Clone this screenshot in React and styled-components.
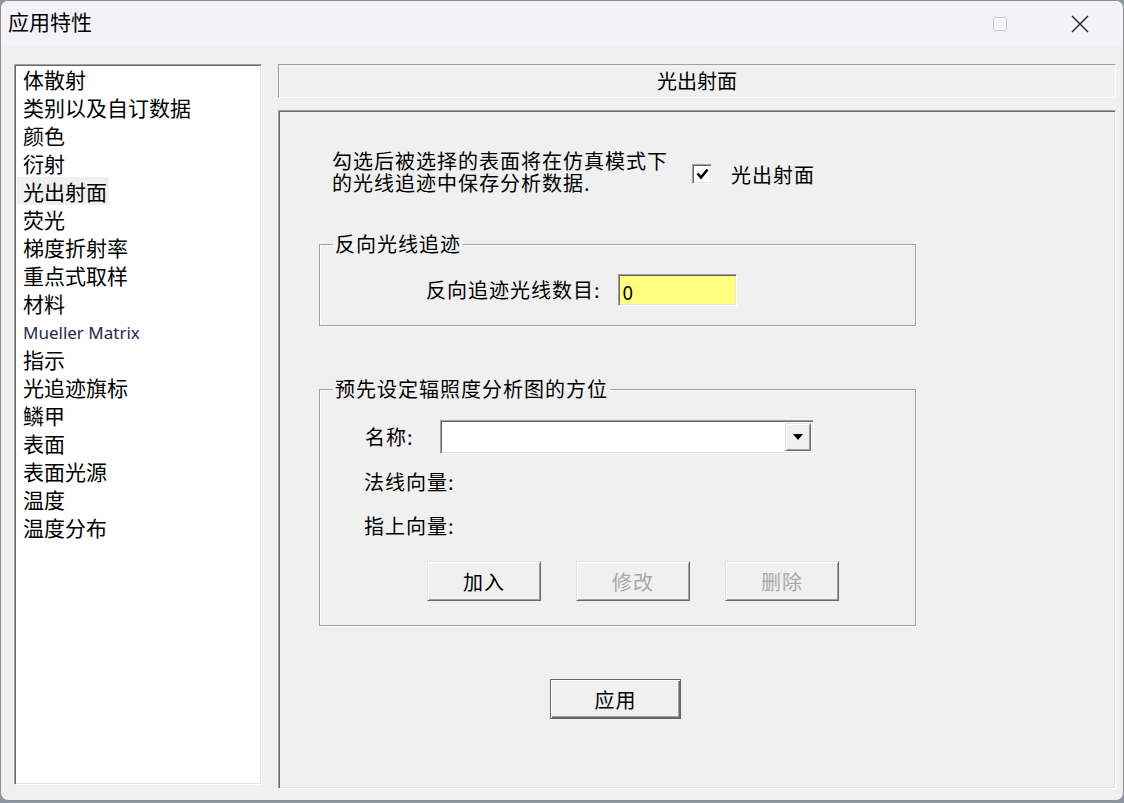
import React, { useState } from 'react';
import styled, { createGlobalStyle, css } from 'styled-components';

const CJK = `"Noto Sans CJK SC", "Noto Sans", sans-serif`;

const GlobalStyle = createGlobalStyle`
  html, body {
    margin: 0;
    padding: 0;
    background: #8f96a3;
  }
  body {
    font-family: ${CJK};
    color: #000;
  }
  * {
    box-sizing: border-box;
  }
`;

// classic win32 3D edges
const sunken = css`
  border: 1px solid;
  border-color: #a0a0a0 #ffffff #ffffff #a0a0a0;
  box-shadow: inset 1px 1px 0 #696969, inset -1px -1px 0 #e3e3e3;
`;

const raised = css`
  border: 1px solid;
  border-color: #e3e3e3 #696969 #696969 #e3e3e3;
  box-shadow: inset 1px 1px 0 #ffffff, inset -1px -1px 0 #a0a0a0;
`;

const Window = styled.div`
  width: 1124px;
  height: 801px;
  border: 1px solid #8e8e8e;
  border-radius: 8px;
  background: #f0f0f0;
  display: flex;
  flex-direction: column;
  overflow: hidden;
`;

const TitleBar = styled.div`
  height: 45px;
  background: #f3f2f8;
  display: flex;
  align-items: center;
  padding: 0 3px 0 7px;
`;

const Title = styled.div`
  flex: 1;
  font-size: 21px;
  line-height: 24px;
  margin-top: -5px;
`;

const CaptionButton = styled.div`
  width: 80px;
  height: 45px;
  display: flex;
  align-items: center;
  justify-content: center;
`;

const Body = styled.div`
  flex: 1;
  display: flex;
  align-items: flex-start;
  gap: 16px;
  padding: 18px 7px 0 13px;
`;

const ListBox = styled.div`
  ${sunken};
  width: 248px;
  height: 721px;
  background: #fff;
  padding: 0 0 0 2px;
`;

const ListItem = styled.div`
  width: fit-content;
  height: 28px;
  line-height: 28px;
  padding: 0 2px 0 6px;
  font-size: 21px;
  background: ${(p) => (p.$selected ? '#f0f0f0' : 'transparent')};
  white-space: nowrap;
  cursor: default;

  ${(p) =>
    p.$latin &&
    css`
      font-family: 'Noto Sans', 'Open Sans', sans-serif;
      font-size: 17px;
      line-height: 31px;
      color: #232850;
    `}
`;

const RightColumn = styled.div`
  width: 838px;
  display: flex;
  flex-direction: column;
  gap: 12px;
`;

const Header = styled.div`
  height: 34px;
  border: 1px solid;
  border-color: #a0a0a0 #ffffff #ffffff #a0a0a0;
  font-size: 20px;
  line-height: 32px;
  text-align: center;
`;

const Panel = styled.div`
  height: 679px;
  border: 1px solid;
  border-color: #a0a0a0 #ffffff #ffffff #a0a0a0;
  box-shadow: inset 1px 1px 0 #696969, inset -1px -1px 0 #e3e3e3;
  padding: 39px 0 0 53px;
  display: flex;
  flex-direction: column;
  align-items: flex-start;
`;

const IntroRow = styled.div`
  display: flex;
  align-items: center;
`;

const IntroText = styled.div`
  width: 360px;
  font-size: 20px;
  letter-spacing: 1px;
  line-height: 22px;
`;

const CheckRow = styled.label`
  display: flex;
  align-items: center;
  gap: 19px;
  font-size: 20px;
  letter-spacing: 1px;
  margin-top: 4px;
`;

const CheckBox = styled.span`
  ${sunken};
  width: 20px;
  height: 20px;
  background: #fff;
  display: flex;
  align-items: center;
  justify-content: center;
`;

const Group = styled.fieldset`
  width: 597px;
  margin: ${(p) => p.$top}px 0 0 -13px;
  padding: ${(p) => p.$pad};
  border: 1px solid #a0a0a0;
  box-shadow: inset 1px 1px 0 #ffffff, 1px 1px 0 #ffffff;
  min-inline-size: 0;
`;

const Legend = styled.legend`
  font-size: 20px;
  letter-spacing: 1px;
  line-height: 24px;
  padding: 0 2px;
  margin-left: 13px;
`;

const FieldRow = styled.div`
  display: flex;
  align-items: center;
  gap: ${(p) => p.$gap || 0}px;
  padding-left: ${(p) => p.$indent}px;
  margin-top: ${(p) => p.$top || 0}px;
  height: ${(p) => p.$h || 22}px;
`;

const Label = styled.span`
  font-size: 20px;
  letter-spacing: 1px;
  line-height: 22px;
  white-space: nowrap;
`;

const TextField = styled.input`
  ${sunken};
  width: 119px;
  height: 32px;
  background: #ffff80;
  font-family: ${CJK};
  font-size: 19px;
  padding: 2px 0 0 4px;
  outline: none;
  color: #000;
`;

const Combo = styled.div`
  ${sunken};
  width: 374px;
  height: 34px;
  background: #fff;
  display: flex;
  justify-content: flex-end;
  padding: 2px;
`;

const ComboArrow = styled.div`
  ${raised};
  width: 26px;
  height: 100%;
  background: #f0f0f0;
  display: flex;
  align-items: center;
  justify-content: center;
`;

const ButtonRow = styled.div`
  display: flex;
  gap: 35px;
  padding-left: 107px;
  margin-top: 24px;
`;

const PushButton = styled.button`
  ${raised};
  width: 114px;
  height: 40px;
  background: #f0f0f0;
  font-family: ${CJK};
  font-size: 20px;
  letter-spacing: 1px;
  color: ${(p) => (p.disabled ? '#a8a8a8' : '#000')};
  padding: 0;
  cursor: default;
`;

const DefaultButton = styled(PushButton)`
  width: 131px;
  height: 40px;
  margin: 53px 0 0 218px;
  border: 1px solid #646464;
  box-shadow: inset 1px 1px 0 #ffffff, inset -1px -1px 0 #696969,
    inset -2px -2px 0 #a0a0a0;
`;

const CATEGORIES = [
  '体散射',
  '类别以及自订数据',
  '颜色',
  '衍射',
  '光出射面',
  '荧光',
  '梯度折射率',
  '重点式取样',
  '材料',
  'Mueller Matrix',
  '指示',
  '光追迹旗标',
  '鳞甲',
  '表面',
  '表面光源',
  '温度',
  '温度分布',
];

export default function App() {
  const [selected, setSelected] = useState('光出射面');
  const [checked, setChecked] = useState(true);

  return (
    <>
      <GlobalStyle />
      <Window>
        <TitleBar>
          <Title>应用特性</Title>
          <CaptionButton>
            <svg width="16" height="16" viewBox="0 0 16 16">
              <rect x="1.5" y="1.5" width="13" height="13" rx="2" fill="none" stroke="#c4c4c4" strokeWidth="1" />
            </svg>
          </CaptionButton>
          <CaptionButton>
            <svg width="18" height="18" viewBox="0 0 18 18">
              <path d="M1 1 L17 17 M17 1 L1 17" stroke="#1a1a1a" strokeWidth="1.3" />
            </svg>
          </CaptionButton>
        </TitleBar>

        <Body>
          <ListBox>
            {CATEGORIES.map((c) => (
              <ListItem
                key={c}
                $selected={c === selected}
                $latin={c === 'Mueller Matrix'}
                onClick={() => setSelected(c)}
              >
                {c}
              </ListItem>
            ))}
          </ListBox>

          <RightColumn>
            <Header>{selected}</Header>
            <Panel>
              <IntroRow>
                <IntroText>
                  勾选后被选择的表面将在仿真模式下
                  <br />
                  的光线追迹中保存分析数据.
                </IntroText>
                <CheckRow onClick={() => setChecked((v) => !v)}>
                  <CheckBox>
                    {checked && (
                      <svg width="13" height="12" viewBox="0 0 13 12">
                        <path d="M1.5 5.5 L5 9.5 L11.5 1.5" fill="none" stroke="#000" strokeWidth="2.6" />
                      </svg>
                    )}
                  </CheckBox>
                  光出射面
                </CheckRow>
              </IntroRow>

              <Group $top={38} $pad="18px 0 19px 0">
                <Legend>反向光线追迹</Legend>
                <FieldRow $indent={106} $gap={17} $h={32}>
                  <Label>反向追迹光线数目:</Label>
                  <TextField defaultValue="0" />
                </FieldRow>
              </Group>

              <Group $top={51} $pad="19px 0 24px 0">
                <Legend>预先设定辐照度分析图的方位</Legend>
                <FieldRow $indent={45} $gap={26} $h={34}>
                  <Label>名称:</Label>
                  <Combo>
                    <ComboArrow>
                      <svg width="10" height="6" viewBox="0 0 10 6">
                        <path d="M0 0 H10 L5 6 Z" fill="#000" />
                      </svg>
                    </ComboArrow>
                  </Combo>
                </FieldRow>
                <FieldRow $indent={44} $top={17}>
                  <Label>法线向量:</Label>
                </FieldRow>
                <FieldRow $indent={44} $top={22}>
                  <Label>指上向量:</Label>
                </FieldRow>
                <ButtonRow>
                  <PushButton>加入</PushButton>
                  <PushButton disabled>修改</PushButton>
                  <PushButton disabled>删除</PushButton>
                </ButtonRow>
              </Group>

              <DefaultButton>应用</DefaultButton>
            </Panel>
          </RightColumn>
        </Body>
      </Window>
    </>
  );
}
